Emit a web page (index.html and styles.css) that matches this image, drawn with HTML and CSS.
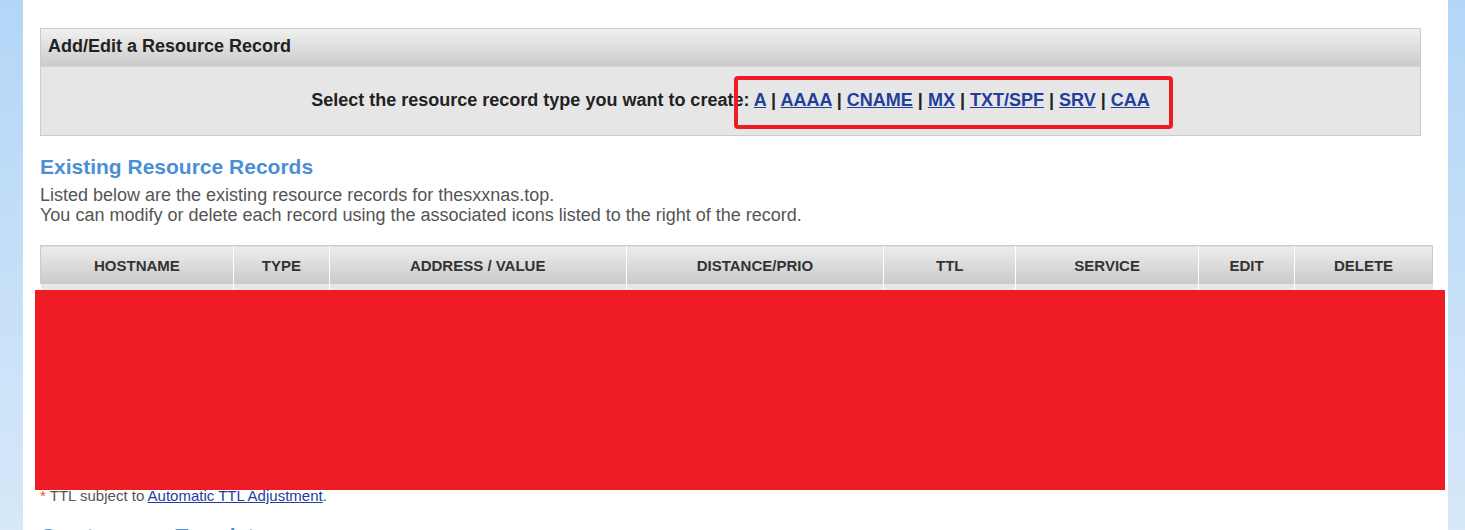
FILE: index.html
```html
<!DOCTYPE html>
<html>
<head>
<meta charset="utf-8">
<link rel="stylesheet" href="styles.css">
</head>
<body>
<div class="page">
  <div class="content">
    <div class="panel">
      <div class="panel-head">Add/Edit a Resource Record</div>
      <div class="panel-body">Select the resource record type you want to create: <a href="#">A</a> | <a href="#">AAAA</a> | <a href="#">CNAME</a> | <a href="#">MX</a> | <a href="#">TXT/SPF</a> | <a href="#">SRV</a> | <a href="#">CAA</a></div>
    </div>
    <h2 class="title">Existing Resource Records</h2>
    <p class="desc">Listed below are the existing resource records for thesxxnas.top.<br>You can modify or delete each record using the associated icons listed to the right of the record.</p>
    <table class="records">
      <thead>
        <tr><th class="c1">HOSTNAME</th><th class="c2">TYPE</th><th class="c3">ADDRESS / VALUE</th><th class="c4">DISTANCE/PRIO</th><th class="c5">TTL</th><th class="c6">SERVICE</th><th class="c7">EDIT</th><th class="c8">DELETE</th></tr>
      </thead>
      <tbody>
        <tr><td></td><td></td><td></td><td></td><td></td><td></td><td></td><td></td></tr>
        <tr><td></td><td></td><td></td><td></td><td></td><td></td><td></td><td></td></tr>
        <tr><td></td><td></td><td></td><td></td><td></td><td></td><td></td><td></td></tr>
        <tr><td></td><td></td><td></td><td></td><td></td><td></td><td></td><td></td></tr>
        <tr><td></td><td></td><td></td><td></td><td></td><td></td><td></td><td></td></tr>
      </tbody>
    </table>
    <p class="note"><span class="star">*</span> TTL subject to <a href="#">Automatic TTL Adjustment</a>.</p>
    <h2 class="title next">Create a new Template</h2>
  </div>
  <div class="redact"></div>
  <div class="highlight"></div>
</div>
</body>
</html>
```
FILE: styles.css
```css
html, body {
  margin: 0;
  padding: 0;
  height: 100%;
  overflow: hidden;
}
body {
  background: linear-gradient(to bottom, #b3d6f7 0%, #d6e8f9 100%);
  font-family: "Liberation Sans", Arial, sans-serif;
}
.page {
  position: relative;
  height: 530px;
}
.content {
  margin: 0 17px 0 23px;
  background: #fff;
  height: 530px;
  padding: 28px 15px 0 17px;
  box-sizing: border-box;
  overflow: hidden;
}
.panel {
  width: 1381px;
  border: 1px solid #cccccc;
  box-sizing: border-box;
}
.panel-head {
  height: 37px;
  background: linear-gradient(to bottom, #f0f0f0 0%, #cbcbcb 100%);
  font-weight: bold;
  font-size: 18px;
  color: #222;
  line-height: 35px;
  padding-left: 7px;
}
.panel-body {
  height: 69px;
  background: #e6e6e6;
  text-align: center;
  font-weight: bold;
  font-size: 18px;
  color: #222;
  line-height: 67px;
  border-top: 1px solid #d4d4d4;
  box-sizing: border-box;
}
.panel-body a {
  color: #233d9b;
}
.title {
  margin: 19px 0 0 0;
  font-size: 21px;
  line-height: 24px;
  color: #4a8fd6;
  font-weight: bold;
}
.desc {
  margin: 6px 0 0 0;
  font-size: 18px;
  line-height: 20px;
  color: #555;
}
.records {
  margin-top: 20px;
  border-collapse: collapse;
  table-layout: fixed;
}
.records th {
  height: 38px;
  background: linear-gradient(to bottom, #ededed 0%, #c9c9c9 100%);
  font-size: 15px;
  font-weight: bold;
  color: #333;
  border-left: 1px solid #fff;
  border-top: 1px solid #cccccc;
  padding: 0;
}
.records th:first-child { border-left: 1px solid #cccccc; }
.records th:last-child { border-right: 1px solid #cccccc; }
.c1 { width: 192px; }
.c2 { width: 95px; }
.c3 { width: 296px; }
.c4 { width: 257px; }
.c5 { width: 131px; }
.c6 { width: 182px; }
.c7 { width: 95px; }
.c8 { width: 137px; }
.records td {
  height: 39px;
  background: #e8e8e8;
  border-left: 1px solid #fff;
  border-bottom: 1px solid #fff;
  padding: 0;
}
.note {
  margin: 3px 0 0 0;
  font-size: 15px;
  color: #555;
  line-height: 17px;
}
.note a { color: #233d9b; }
.star { color: #e8542a; }
.next {
  margin-top: 20px;
}
.redact {
  position: absolute;
  left: 35px;
  top: 290px;
  width: 1410px;
  height: 200px;
  background: #ed1c24;
}
.highlight {
  position: absolute;
  left: 734px;
  top: 76px;
  width: 439px;
  height: 53px;
  border: 4px solid #ed1c24;
  border-radius: 4px;
  box-sizing: border-box;
}
```
